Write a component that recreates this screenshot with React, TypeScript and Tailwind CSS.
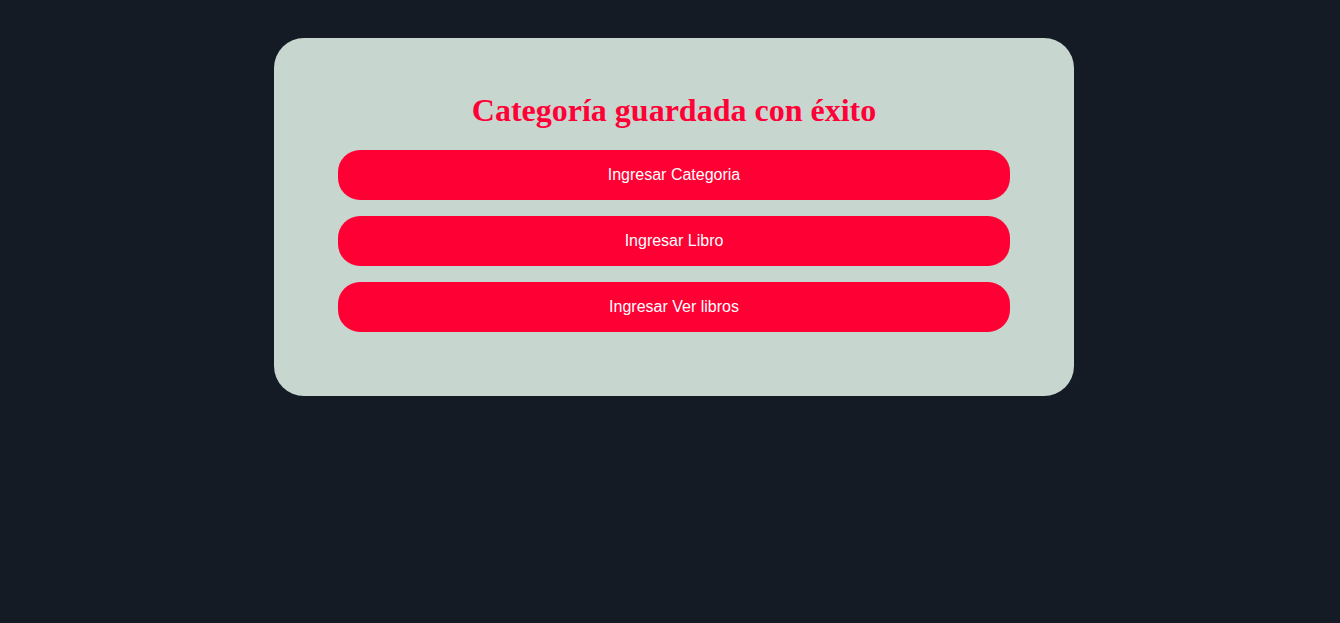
export default function App() {
  const items = ["Ingresar Categoria", "Ingresar Libro", "Ingresar Ver libros"];
  return (
    <div className="min-h-screen w-full bg-[#141b25] pt-[38px]">
      <div className="ml-[274px] w-[800px] rounded-[30px] bg-[#c7d7cf] px-16 pt-8 pb-16">
        <h1 className="my-[21.5px] text-center font-['Liberation_Serif',serif] text-[32px] font-bold leading-[37px] text-[#ff0037]">
          Categoría guardada con éxito
        </h1>
        <div className="flex flex-col gap-4">
          {items.map((label) => (
            <button
              key={label}
              className="h-[50px] w-full rounded-[22px] bg-[#ff0035] font-['Liberation_Sans',sans-serif] text-base text-white"
            >
              {label}
            </button>
          ))}
        </div>
      </div>
    </div>
  );
}
